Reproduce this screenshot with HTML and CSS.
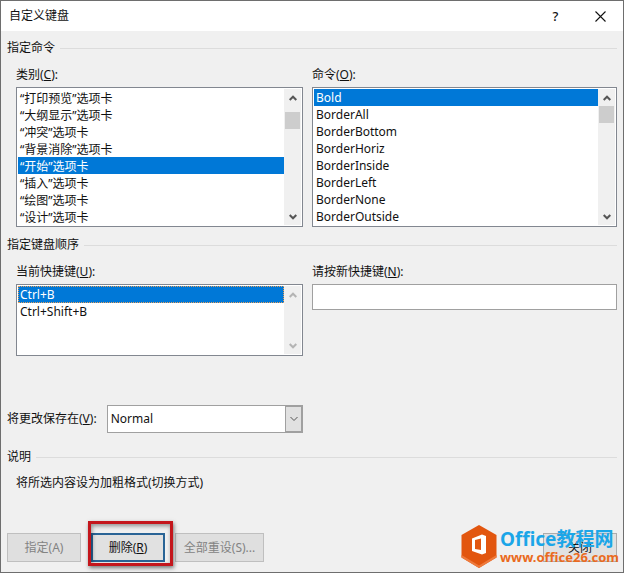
FILE: index.html
```html
<!DOCTYPE html>
<html lang="zh-CN">
<head>
  <meta charset="UTF-8">
  <meta name="viewport" content="width=device-width, initial-scale=1.0">
  <link rel="stylesheet" href="styles.css">
  <title>自定义键盘</title>
</head>
<body>
  <main class="dialog">
    <header class="titlebar">
      <h1 class="titlebar__text">自定义键盘</h1>
      <button class="titlebar__button" type="button" aria-label="帮助">?</button>
      <button class="titlebar__button" type="button" aria-label="关闭窗口">
        <svg width="11" height="11" viewBox="0 0 11 11"><path d="M.5 .5l10 10M10.5 .5l-10 10" fill="none" stroke="#111" stroke-width="1.1"/></svg>
      </button>
    </header>

    <form class="content">
      <h2 class="group">指定命令</h2>
      <div class="columns">
        <div class="field">
          <label for="category">类别(<u>C</u>):</label>
          <div class="listbox">
            <select class="listbox__select" id="category" size="8">
              <option>“打印预览”选项卡</option>
              <option>“大纲显示”选项卡</option>
              <option>“冲突”选项卡</option>
              <option>“背景消除”选项卡</option>
              <option selected>“开始”选项卡</option>
              <option>“插入”选项卡</option>
              <option>“绘图”选项卡</option>
              <option>“设计”选项卡</option>
            </select>
            <div class="scrollbar scrollbar--middle">
              <svg class="arrow" viewBox="0 0 8 6"><path d="M.7 5L4 1.7 7.3 5"/></svg>
              <span class="scrollbar__thumb"></span>
              <svg class="arrow" viewBox="0 0 8 6"><path d="M.7 1L4 4.3 7.3 1"/></svg>
            </div>
          </div>
        </div>
        <div class="field">
          <label for="command">命令(<u>O</u>):</label>
          <div class="listbox">
            <select class="listbox__select" id="command" size="8">
              <option selected>Bold</option>
              <option>BorderAll</option>
              <option>BorderBottom</option>
              <option>BorderHoriz</option>
              <option>BorderInside</option>
              <option>BorderLeft</option>
              <option>BorderNone</option>
              <option>BorderOutside</option>
            </select>
            <div class="scrollbar">
              <svg class="arrow" viewBox="0 0 8 6"><path d="M.7 5L4 1.7 7.3 5"/></svg>
              <span class="scrollbar__thumb"></span>
              <svg class="arrow" viewBox="0 0 8 6"><path d="M.7 1L4 4.3 7.3 1"/></svg>
            </div>
          </div>
        </div>
      </div>

      <h2 class="group">指定键盘顺序</h2>
      <div class="columns">
        <div class="field">
          <label for="current">当前快捷键(<u>U</u>):</label>
          <div class="listbox">
            <select class="listbox__select listbox__select--focus" id="current" size="4">
              <option selected>Ctrl+B</option>
              <option>Ctrl+Shift+B</option>
            </select>
            <div class="scrollbar scrollbar--disabled">
              <svg class="arrow" viewBox="0 0 8 6"><path d="M.7 5L4 1.7 7.3 5"/></svg>
              <svg class="arrow" viewBox="0 0 8 6"><path d="M.7 1L4 4.3 7.3 1"/></svg>
            </div>
          </div>
        </div>
        <div class="field">
          <label for="shortcut">请按新快捷键(<u>N</u>):</label>
          <input class="textbox" id="shortcut" type="text">
        </div>
      </div>

      <div class="columns columns--save">
        <div class="save">
          <label for="save">将更改保存在(<u>V</u>):</label>
          <div class="dropdown">
            <select class="dropdown__select" id="save">
              <option>Normal</option>
            </select>
            <span class="dropdown__arrow">
              <svg class="arrow arrow--thin" viewBox="0 0 8 6"><path d="M.5 1L4 4.5 7.5 1"/></svg>
            </span>
          </div>
        </div>
      </div>

      <h2 class="group group--description">说明</h2>
      <p class="description">将所选内容设为加粗格式(切换方式)</p>

      <footer class="buttons">
        <button class="button" type="button" disabled>指定(A)</button>
        <span class="highlight">
          <button class="button button--default" type="button">删除(<u>R</u>)</button>
        </span>
        <button class="button button--wide" type="button" disabled>全部重设(S)...</button>
        <button class="button button--close" type="button">关闭</button>
      </footer>
    </form>

    <div class="watermark">
      <svg class="watermark__logo" viewBox="0 0 36 43">
        <path d="M18 0L35.500 10v22.500L18 43 .5 32.500V10z" fill="#e2560f"/>
        <path d="M.5 32.500L18 43l17.500-10.500V30L18 40.500.5 30z" fill="#ee7a3c"/>
        <path fill-rule="evenodd" d="M11 13.500L21 9.500l4 1.500v17l-4 1.500-10-3.500zM14 15v9l6 1V13.500z" fill="#fff"/>
      </svg>
      <div class="watermark__text">
        <span class="watermark__name">Office教程网</span>
        <span class="watermark__url">www.office26.com</span>
      </div>
    </div>
  </main>
</body>
</html>
```

FILE: styles.css
```css
* {
  box-sizing: border-box;
}

body {
  margin: 0;
  background: #f0f0f0;
  color: #111;
  font: 12px/18px "Noto Sans", "Noto Sans CJK SC", sans-serif;
}

button,
input,
select {
  font: inherit;
  color: inherit;
  border-radius: 0;
}

h1,
h2,
p {
  margin: 0;
  font-size: 12px;
  font-weight: normal;
}

.dialog {
  position: relative;
  min-height: 100vh;
  border: 1px solid #6e6e6e;
  background: #f0f0f0;
}

/* title bar */
.titlebar {
  display: flex;
  align-items: center;
  height: 30px;
  padding-left: 8px;
  background: #fff;
}

.titlebar__text {
  flex: 1;
}

.titlebar__button {
  display: flex;
  align-items: center;
  justify-content: center;
  width: 45px;
  height: 30px;
  padding: 0;
  border: 0;
  background: none;
  font-size: 13px;
  font-weight: 500;
}

/* content */
.content {
  padding: 8px 6px 10px;
}

.group {
  display: flex;
  align-items: center;
  gap: 5px;
}

.group::after {
  content: "";
  flex: 1;
  height: 1px;
  background: #dcdcdc;
}

.columns {
  display: grid;
  grid-template-columns: 287fr 305fr;
  gap: 9px;
  padding: 9px 0 9px 9px;
}

.field {
  display: flex;
  flex-direction: column;
  gap: 3px;
}

/* list boxes */
.listbox {
  display: flex;
  padding: 1px;
  border: 1px solid #828790;
  background: #fff;
}

.listbox__select {
  appearance: none;
  flex: 1;
  min-width: 0;
  height: 136px;
  padding: 0;
  border: 0;
  outline: 0;
  background: #fff;
  overflow: hidden;
  scrollbar-width: none;
}

.listbox__select option {
  height: 17px;
  min-height: 17px;
  padding: 0 2px;
  line-height: 17px;
}

.listbox__select option:checked {
  background: #0078d7 linear-gradient(#0078d7, #0078d7);
  color: #fff;
}

.listbox__select--focus {
  height: 68px;
}

.listbox__select--focus option:checked {
  outline: 1px dotted #e8a05a;
  outline-offset: -1px;
}

.scrollbar {
  display: flex;
  flex-direction: column;
  align-items: center;
  justify-content: space-between;
  width: 17px;
  padding: 6px 1px 5px;
  background: #f0f0f0;
}

.scrollbar__thumb {
  width: 15px;
  height: 17px;
  margin: 5px 0 auto;
  background: #cdcdcd;
}

.scrollbar--middle .scrollbar__thumb {
  margin-top: 11px;
}

.arrow {
  width: 8px;
  height: 6px;
  fill: none;
  stroke: #555;
  stroke-width: 2;
}

.arrow--thin {
  stroke-width: 1;
}

.scrollbar--disabled .arrow {
  stroke: #b4b4b4;
}

.textbox {
  width: 100%;
  height: 26px;
  padding: 0 4px;
  border: 1px solid #a0a0a0;
  background: #fff;
}

/* save in */
.columns--save {
  padding: 40px 0 0;
  grid-template-columns: 296fr 305fr;
}

.save {
  display: flex;
  align-items: center;
  gap: 10px;
}

.dropdown {
  display: flex;
  flex: 1;
  height: 28px;
  border: 1px solid #a0a0a0;
  background: #fff;
}

.dropdown__select {
  appearance: none;
  flex: 1;
  min-width: 0;
  padding: 0 3px;
  border: 0;
  background: #fff;
}

.dropdown__arrow {
  display: flex;
  align-items: center;
  justify-content: center;
  width: 17px;
  border: 1px solid #a0a0a0;
  background: #e1e1e1;
}

.group--description {
  margin-top: 15px;
}

.description {
  padding: 8px 9px 41px;
}

/* bottom buttons */
.buttons {
  display: flex;
  gap: 10px;
}

.button {
  width: 74px;
  height: 29px;
  padding: 0;
  border: 1px solid #adadad;
  background: #e1e1e1;
}

.button:disabled {
  border-color: #bfbfbf;
  background: #dfdfdf;
  color: #838383;
}

.button--default {
  display: block;
  border: 2px solid #2a6496;
}

.button--wide {
  width: 89px;
}

.button--close {
  margin-left: auto;
}

.highlight {
  position: relative;
}

.highlight::after {
  content: "";
  position: absolute;
  inset: -12px -8px -4px -3px;
  border: 3px solid #c4161c;
  box-shadow: 1px 2px 4px rgba(0, 0, 0, .5), inset 1px 2px 4px rgba(0, 0, 0, .4);
  pointer-events: none;
}

/* site mark over the close button */
.watermark {
  position: absolute;
  right: 4px;
  bottom: 4px;
  display: flex;
  align-items: center;
  gap: 3px;
  pointer-events: none;
}

.watermark__logo {
  width: 36px;
  height: 43px;
}

.watermark__text {
  display: flex;
  flex-direction: column;
  font-weight: bold;
  white-space: nowrap;
}

.watermark__name {
  color: #1ba6e8;
  font-size: 19px;
  line-height: 20px;
}

.watermark__url {
  color: #ea6a20;
  font-size: 13px;
  line-height: 16px;
}
```
